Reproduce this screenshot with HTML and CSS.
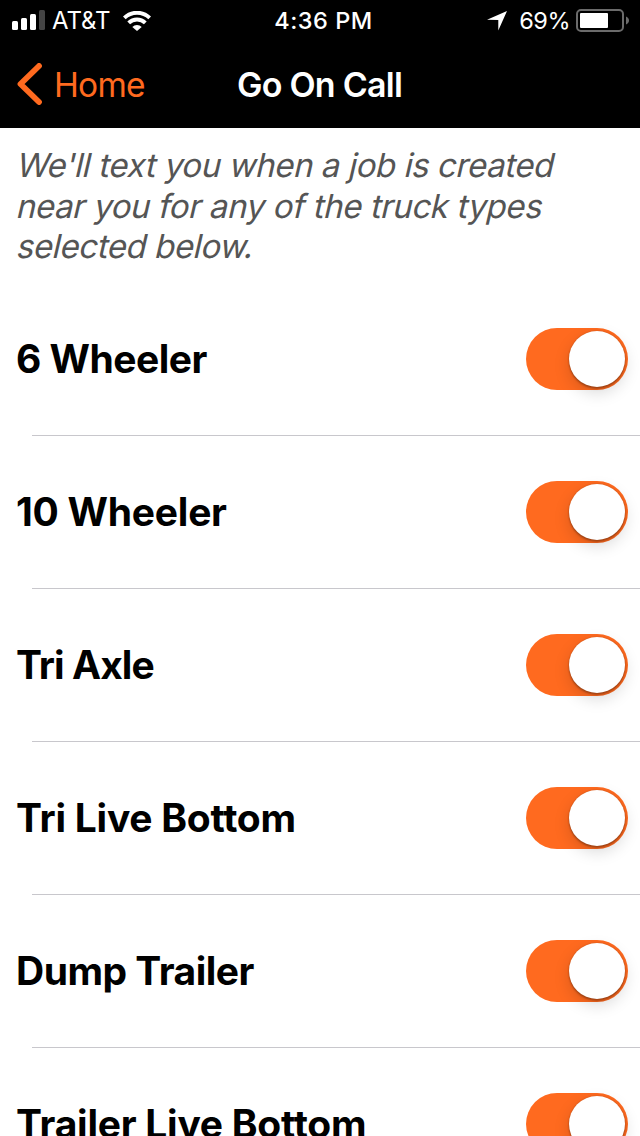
FILE: index.html
```html
<!DOCTYPE html>
<html lang="en">
<head>
    <meta charset="UTF-8">
    <meta name="viewport" content="width=device-width, initial-scale=1.0">
    <title>Go On Call</title>
    <link rel="stylesheet" href="styles.css">
</head>
<body>
    <header class="header">
        <div class="status-bar">
            <div class="status-left">
                <svg class="signal" width="33" height="20" viewBox="0 0 33 20" fill="#fff">
                    <rect x="0" y="11" width="6" height="9" rx="1.5"/>
                    <rect x="9" y="8" width="6" height="12" rx="1.5"/>
                    <rect x="18" y="4" width="6" height="16" rx="1.5"/>
                    <rect x="27" y="0" width="6" height="20" rx="1.5" fill="#444"/>
                </svg>
                <span class="carrier">AT&amp;T</span>
                <svg class="wifi" width="28" height="20" viewBox="0 0 28 20">
                    <path d="M1.3 6.9a18.2 18.2 0 0 1 25.4 0" fill="none" stroke="#fff" stroke-width="3.9"/>
                    <path d="M5.7 11.9a11.7 11.7 0 0 1 16.6 0" fill="none" stroke="#fff" stroke-width="3.9"/>
                    <path d="M9.3 15.9a6.6 6.6 0 0 1 9.4 0L14 20z" fill="#fff"/>
                </svg>
            </div>
            <span class="time">4:36 PM</span>
            <div class="status-right">
                <svg class="location" width="20" height="20" viewBox="0 0 20 20">
                    <path d="M20 0L11.3 19.5V8.9L0 8.8z" fill="#fff"/>
                </svg>
                <span class="percent">69%</span>
                <svg class="battery" width="53" height="23" viewBox="0 0 53 23">
                    <rect x="1" y="1" width="46" height="21" rx="4" fill="none" stroke="#6b6b6b" stroke-width="2"/>
                    <rect x="4" y="4" width="28" height="15" rx="1" fill="#fff"/>
                    <path d="M50 7.5c4 1.5 4 6.5 0 8z" fill="#6b6b6b"/>
                </svg>
            </div>
        </div>
        <nav class="nav-bar">
            <a class="back" href="#">
                <svg class="chevron" width="25" height="42" viewBox="0 0 25 42">
                    <path d="M22 3L3.5 21L22 39" fill="none" stroke="#ff6a1f" stroke-width="5.8" stroke-linecap="round" stroke-linejoin="round"/>
                </svg>
                <span class="back-label">Home</span>
            </a>
            <h1 class="title">Go On Call</h1>
        </nav>
    </header>

    <p class="intro">
        <span class="line">We'll text you when a job is created</span>
        <span class="line">near you for any of the truck types</span>
        <span class="line">selected below.</span>
    </p>

    <ul class="truck-list">
        <li class="row">
            <span class="name">6 Wheeler</span>
            <span class="toggle"><span class="knob"></span></span>
        </li>
        <li class="row">
            <span class="name wide">10 Wheeler</span>
            <span class="toggle"><span class="knob"></span></span>
        </li>
        <li class="row">
            <span class="name tight">Tri Axle</span>
            <span class="toggle"><span class="knob"></span></span>
        </li>
        <li class="row">
            <span class="name wide">Tri Live Bottom</span>
            <span class="toggle"><span class="knob"></span></span>
        </li>
        <li class="row">
            <span class="name">Dump Trailer</span>
            <span class="toggle"><span class="knob"></span></span>
        </li>
        <li class="row">
            <span class="name wide">Trailer Live Bottom</span>
            <span class="toggle"><span class="knob"></span></span>
        </li>
    </ul>
</body>
</html>
```
FILE: styles.css
```css
* {
    margin: 0;
    padding: 0;
    box-sizing: border-box;
}

body {
    height: 1136px;
    overflow: hidden;
    background: #fff;
    font-family: Inter, "Liberation Sans", sans-serif;
}

.header {
    height: 128px;
    background: #000;
    color: #fff;
}

.status-bar {
    display: grid;
    grid-template-columns: 1fr auto 1fr;
    align-items: center;
    height: 40px;
    padding: 0 11px 0 12px;
    font-size: 24px;
    line-height: 40px;
}

.status-left,
.status-right {
    display: flex;
    align-items: center;
    height: 40px;
}

.status-right {
    justify-content: flex-end;
}

.signal {
    margin-bottom: 1px;
}

.carrier {
    margin: 0 13px 0 7px;
    padding-top: 1px;
    letter-spacing: -0.1px;
}

.time {
    padding: 1px 0 0 6px;
    font-size: 23.5px;
    font-weight: 500;
    letter-spacing: 0.5px;
}

.location {
    margin-right: 12px;
}

.percent {
    margin-right: 6px;
    padding-top: 1px;
    font-size: 23.5px;
    letter-spacing: -0.5px;
}

.nav-bar {
    display: grid;
    grid-template-columns: 1fr auto 1fr;
    align-items: center;
    height: 88px;
    padding: 0 18px 0 17px;
}

.back {
    display: flex;
    align-items: center;
    gap: 12px;
    color: #ff6a1f;
    font-size: 33.5px;
    letter-spacing: -0.8px;
    text-decoration: none;
}

.back-label {
    padding-top: 2px;
}

.title {
    font-size: 34px;
    font-weight: 600;
    letter-spacing: -0.75px;
}

.intro {
    height: 155px;
    padding: 17px 16px 0 18px;
    color: #555;
    font-size: 33px;
    line-height: 40.5px;
    letter-spacing: -0.42px;
    white-space: nowrap;
}

/* slanted roman letters instead of the italic cut */
.line {
    display: block;
    transform: skewX(-13deg);
}

.truck-list {
    list-style: none;
}

.row {
    display: flex;
    align-items: center;
    justify-content: space-between;
    height: 153px;
    padding: 0 12px 1px 16px;
    background: linear-gradient(#c8c7cc, #c8c7cc) no-repeat 32px 100% / 100% 1px;
}

.name {
    padding-bottom: 1px;
    font-size: 39px;
    font-weight: 700;
    letter-spacing: -0.5px;
}

.name.wide {
    letter-spacing: -0.25px;
}

.name.tight {
    letter-spacing: -0.95px;
}

.toggle {
    display: flex;
    justify-content: flex-end;
    width: 102px;
    height: 62px;
    padding: 3px;
    border-radius: 31px;
    background: #ff6a1f;
}

.knob {
    width: 56px;
    height: 56px;
    border-radius: 50%;
    background: #fff;
    box-shadow: 0 6px 16px rgba(0, 0, 0, 0.15), 0 2px 2px rgba(0, 0, 0, 0.25), 0 0 2px rgba(0, 0, 0, 0.2);
}
```
